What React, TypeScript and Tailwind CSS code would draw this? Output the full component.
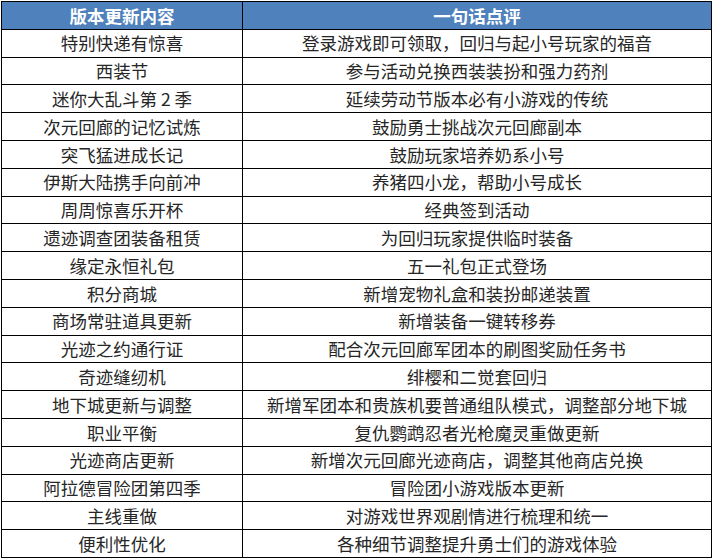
const rows: [string, string][] = [
  ['特别快递有惊喜', '登录游戏即可领取，回归与起小号玩家的福音'],
  ['西装节', '参与活动兑换西装装扮和强力药剂'],
  ['迷你大乱斗第 2 季', '延续劳动节版本必有小游戏的传统'],
  ['次元回廊的记忆试炼', '鼓励勇士挑战次元回廊副本'],
  ['突飞猛进成长记', '鼓励玩家培养奶系小号'],
  ['伊斯大陆携手向前冲', '养猪四小龙，帮助小号成长'],
  ['周周惊喜乐开杯', '经典签到活动'],
  ['遗迹调查团装备租赁', '为回归玩家提供临时装备'],
  ['缘定永恒礼包', '五一礼包正式登场'],
  ['积分商城', '新增宠物礼盒和装扮邮递装置'],
  ['商场常驻道具更新', '新增装备一键转移券'],
  ['光迹之约通行证', '配合次元回廊军团本的刷图奖励任务书'],
  ['奇迹缝纫机', '绯樱和二觉套回归'],
  ['地下城更新与调整', '新增军团本和贵族机要普通组队模式，调整部分地下城'],
  ['职业平衡', '复仇鹦鹉忍者光枪魔灵重做更新'],
  ['光迹商店更新', '新增次元回廊光迹商店，调整其他商店兑换'],
  ['阿拉德冒险团第四季', '冒险团小游戏版本更新'],
  ['主线重做', '对游戏世界观剧情进行梳理和统一'],
  ['便利性优化', '各种细节调整提升勇士们的游戏体验'],
];

export default function App() {
  return (
    <div className="w-[714px] h-[560px] bg-white pl-[1px] pt-[1px] font-['Noto_Sans_CJK_SC','Noto_Sans',sans-serif]">
      <table className="w-[711px] border-collapse table-fixed text-[17.5px] text-[#262626]">
        <colgroup>
          <col className="w-[241px]" />
          <col />
        </colgroup>
        <thead>
          <tr className="h-[27.8px] bg-[#4f81bd] text-white">
            <th className="border border-black p-0 font-bold leading-none">版本更新内容</th>
            <th className="border border-black p-0 font-bold leading-none">一句话点评</th>
          </tr>
        </thead>
        <tbody>
          {rows.map(([name, note]) => (
            <tr key={name} className="h-[27.8px]">
              <td className="border border-black p-0 text-center leading-none">{name}</td>
              <td className="border border-black p-0 text-center leading-none">{note}</td>
            </tr>
          ))}
        </tbody>
      </table>
    </div>
  );
}
